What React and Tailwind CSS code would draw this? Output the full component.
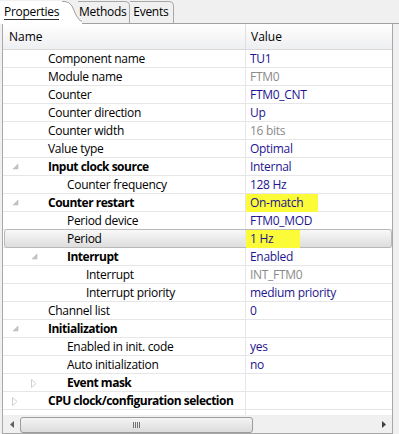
import React from "react";

const rows = [
  { n: "Component name", l: 1, v: "TU1" },
  { n: "Module name", l: 1, v: "FTM0", g: true },
  { n: "Counter", l: 1, v: "FTM0_CNT" },
  { n: "Counter direction", l: 1, v: "Up" },
  { n: "Counter width", l: 1, v: "16 bits", g: true },
  { n: "Value type", l: 1, v: "Optimal" },
  { n: "Input clock source", l: 1, b: true, e: "open", v: "Internal" },
  { n: "Counter frequency", l: 2, v: "128 Hz" },
  { n: "Counter restart", l: 1, b: true, e: "open", v: "On-match", h: "w-[72px]" },
  { n: "Period device", l: 2, v: "FTM0_MOD" },
  { n: "Period", l: 2, v: "1 Hz", h: "w-[54px]", sel: true },
  { n: "Interrupt", l: 2, b: true, e: "open", v: "Enabled" },
  { n: "Interrupt", l: 3, v: "INT_FTM0", g: true },
  { n: "Interrupt priority", l: 3, v: "medium priority" },
  { n: "Channel list", l: 1, v: "0" },
  { n: "Initialization", l: 1, b: true, e: "open", v: "" },
  { n: "Enabled in init. code", l: 2, v: "yes" },
  { n: "Auto initialization", l: 2, v: "no" },
  { n: "Event mask", l: 2, b: true, e: "closed", v: "" },
  { n: "CPU clock/configuration selection", l: 1, b: true, e: "closed", v: "" },
];

const padFor = { 1: "pl-[45px]", 2: "pl-[64px]", 3: "pl-[83px]" };
const triFor = { 1: "left-[9px]", 2: "left-[28px]", 3: "left-[47px]" };

function Tri({ kind }) {
  if (kind === "open")
    return (
      <svg width="7" height="7" viewBox="0 0 7 7" className="block">
        <path d="M6 1 L6 6 L1 6 Z" fill="#c4c4c4" stroke="#bdbdbd" strokeWidth="0.6" />
      </svg>
    );
  return (
    <svg width="6" height="9" viewBox="0 0 6 9" className="block">
      <path d="M0.5 0.5 L5 4.5 L0.5 8.5 Z" fill="#fff" stroke="#d0d0d0" strokeWidth="1" />
    </svg>
  );
}

function Row({ r }) {
  return (
    <div className="relative flex h-[18px] border-b border-[#e6e6e6]">
      {r.sel && (
        <div className="absolute left-[1px] right-0 top-[-1px] bottom-[-1px] rounded-[3px] border border-[#b9b9b9] bg-gradient-to-b from-[#f8f8f8] to-[#dedede]" />
      )}
      <div className={`relative flex w-[243px] items-center border-r border-[#e6e6e6] ${padFor[r.l]}`}>
        {r.e && (
          <div className={`absolute top-[5px] ${triFor[r.l]}`}>
            <Tri kind={r.e} />
          </div>
        )}
        <span className={`whitespace-nowrap ${r.b ? "font-bold tracking-[-0.5px]" : ""} text-black`}>{r.n}</span>
      </div>
      <div className="relative flex flex-1 items-center">
        {r.h && <div className={`absolute left-0 top-0 h-[18px] bg-[#fbfb38] ${r.h}`} />}
        <span className={`relative pl-[4px] whitespace-nowrap ${r.g ? "text-[#8a8a8a]" : "text-[#1e1490]"}`}>{r.v}</span>
      </div>
    </div>
  );
}

export default function App() {
  return (
    <div
      className="relative w-[399px] h-[434px] overflow-hidden bg-[#f0f0f0] text-[12px] leading-[16px]"
      style={{ fontFamily: '"Open Sans", "Noto Sans", sans-serif' }}
    >
      {/* Tabs */}
      <div className="relative flex h-[24px] items-end border-b border-[#a0a0a0]">
        <div className="relative z-10 flex h-[23px] mb-[-1px]">
          <div className="flex w-[62px] items-start bg-white pl-[4px] pt-[3px]">
            <span className="border-b border-[#333] leading-[15px] tracking-[-0.3px]">Properties</span>
          </div>
          <svg width="20" height="24" viewBox="0 0 20 24" className="block">
            <path d="M0 0 L3 0 Q7 0 10 5 L14 14 Q17 20 20 20 L20 24 L0 24 Z" fill="#fff" />
            <path d="M0 0.5 L3 0.5 Q7 0.5 10 5 L14 14 Q17 20 20 20.5" fill="none" stroke="#a0a0a0" />
          </svg>
        </div>
        <div className="ml-[-4px] flex h-[22px] items-start rounded-tr-[5px] border-r border-t border-[#a8a8a8] pl-[1px] pr-[3px] pt-[2px]">
          <span className="tracking-[-0.3px]">Methods</span>
        </div>
        <div className="flex h-[22px] items-start rounded-tr-[5px] border-r border-t border-[#a8a8a8] pl-[3px] pr-[5px] pt-[2px]">
          <span className="tracking-[-0.3px]">Events</span>
        </div>
      </div>

      {/* Panel */}
      <div className="flex h-[410px]">
        <div className="ml-[2px] flex w-[391px] flex-col border-l border-r border-[#a8a8a8] bg-white">
          {/* Header */}
          <div className="flex h-[26px] shrink-0 border-b border-[#d8d8d8] bg-gradient-to-b from-white to-[#eeeff1]">
            <div className="flex w-[243px] items-center border-r border-[#e0e0e0] pl-[6px]">Name</div>
            <div className="flex flex-1 items-center pl-[5px]">Value</div>
          </div>
          {/* Rows */}
          <div className="flex-1 overflow-hidden tracking-[-0.3px]">
            {rows.map((r, i) => (
              <Row key={i} r={r} />
            ))}
            <div className="flex h-[18px]">
              <div className="w-[243px] border-r border-[#e6e6e6]" />
            </div>
          </div>
          {/* Horizontal scrollbar */}
          <div className="flex h-[18px] shrink-0 items-center bg-[#f0f0f0] border-t border-[#f0f0f0]">
            <div className="flex w-[17px] justify-center">
              <svg width="4" height="7" viewBox="0 0 4 7"><path d="M4 0 L0 3.5 L4 7 Z" fill="#606060" /></svg>
            </div>
            <div className="flex h-[16px] w-[233px] items-center justify-center rounded-[3px] border border-[#9c9c9c] bg-gradient-to-b from-[#f4f4f4] to-[#dcdcdc]">
              <div className="flex gap-[1px]">
                <div className="h-[6px] w-[1px] bg-[#707070]" />
                <div className="h-[6px] w-[1px] bg-[#707070]" />
                <div className="h-[6px] w-[1px] bg-[#707070]" />
                <div className="h-[6px] w-[1px] bg-[#707070]" />
              </div>
            </div>
            <div className="flex-1" />
            <div className="flex w-[17px] justify-center">
              <svg width="4" height="7" viewBox="0 0 4 7"><path d="M0 0 L4 3.5 L0 7 Z" fill="#404040" /></svg>
            </div>
          </div>
          <div className="h-[1px] shrink-0 bg-[#a8a8a8]" />
        </div>
      </div>
    </div>
  );
}
